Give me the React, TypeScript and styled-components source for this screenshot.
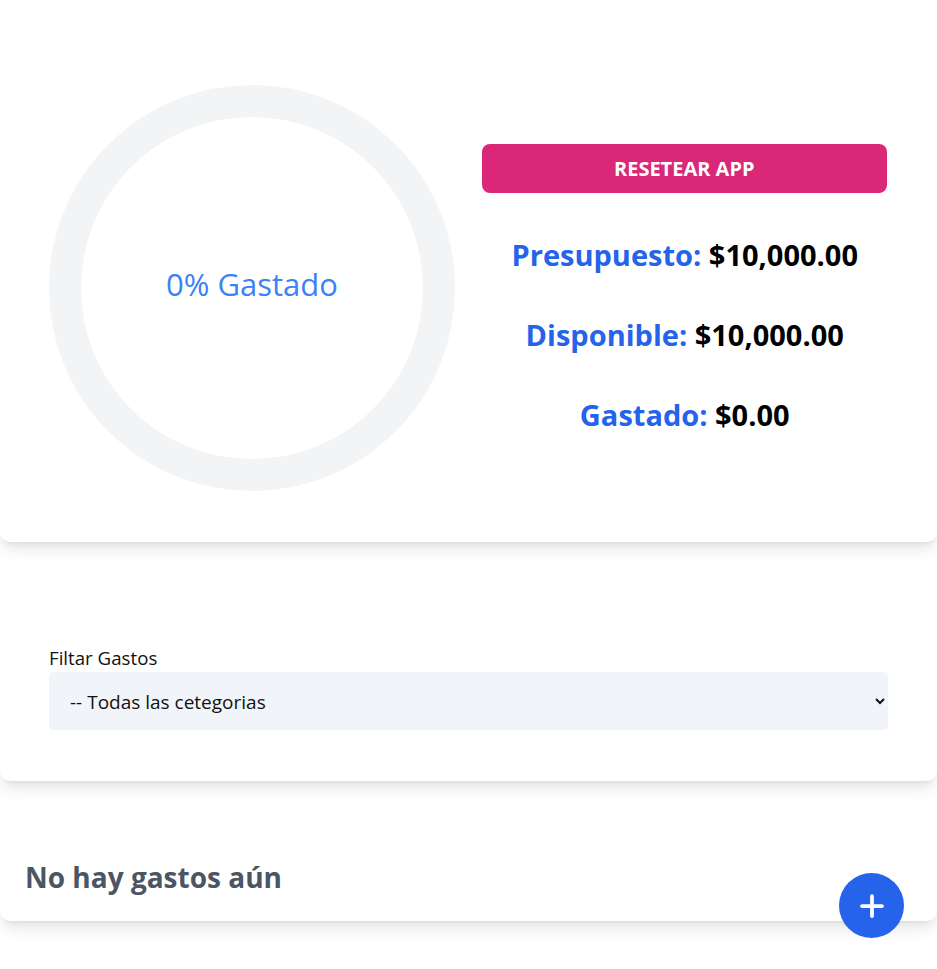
import React from "react";
import styled, { createGlobalStyle } from "styled-components";

const GlobalStyle = createGlobalStyle`
  html, body { margin: 0; padding: 0; background: #ffffff; }
  body { font-family: "Open Sans", "Noto Sans", sans-serif; color: #000; }
  * { box-sizing: border-box; }
`;

const Page = styled.main`
  display: flex;
  flex-direction: column;
  gap: 49px;
  padding-top: 32px;
  padding-bottom: 49px;
`;

const Card = styled.section<{ $pad: string }>`
  background: #ffffff;
  border-radius: 10px;
  box-shadow: 0 10px 15px -3px rgba(0, 0, 0, 0.1), 0 4px 6px -4px rgba(0, 0, 0, 0.1);
  padding: ${(p) => p.$pad};
`;

const BudgetGrid = styled.div`
  display: grid;
  grid-template-columns: 1fr 1fr;
  gap: 26px;
`;

const RingWrap = styled.div`
  display: flex;
  justify-content: center;
`;

const RingText = styled.text`
  font-family: "Open Sans", sans-serif;
  font-size: 31px;
  fill: #3b82f6;
`;

const StatsColumn = styled.div`
  display: flex;
  flex-direction: column;
  justify-content: center;
  align-items: stretch;
  gap: 44px;
`;

const ResetButton = styled.button`
  height: 49px;
  margin: 0 1px 0 0;
  border: none;
  border-radius: 8px;
  background: #db2777;
  color: #ffffff;
  font-family: "Open Sans", sans-serif;
  font-weight: 700;
  font-size: 20px;
  text-transform: uppercase;
  cursor: pointer;
`;

const Stat = styled.p`
  margin: 0;
  text-align: center;
  font-size: 29px;
  line-height: 36px;
  font-weight: 700;
  color: #000;
`;

const StatLabel = styled.span`
  color: #2563eb;
`;

const FilterForm = styled.form`
  display: flex;
  flex-direction: column;
  gap: 2px;
`;

const FilterLabel = styled.label`
  font-size: 18.7px;
  line-height: 25px;
  color: #111;
`;

const Select = styled.select`
  height: 58px;
  width: 100%;
  border: none;
  border-radius: 4px;
  background: #f1f5f9;
  padding: 2px 12px 0 17px;
  font-family: "Open Sans", sans-serif;
  font-size: 19px;
  color: #111;
  outline: none;
`;

const EmptyTitle = styled.h2`
  margin: 0;
  font-size: 28px;
  line-height: 34px;
  font-weight: 700;
  color: #4b5563;
`;

const Fab = styled.button`
  position: fixed;
  right: 33px;
  bottom: 31px;
  width: 65px;
  height: 65px;
  border-radius: 50%;
  border: none;
  background: #2563eb;
  display: flex;
  align-items: center;
  justify-content: center;
  padding: 0;
  cursor: pointer;
`;

export default function App() {
  const size = 406;
  const stroke = 32;
  const r = (size - stroke) / 2;
  return (
    <>
      <GlobalStyle />
      <Page>
        <Card $pad="53px 49px 51px 49px">
          <BudgetGrid>
            <RingWrap>
              <svg width={size} height={size} viewBox={`0 0 ${size} ${size}`}>
                <circle cx={size / 2} cy={size / 2} r={r} fill="none" stroke="#f3f4f5" strokeWidth={stroke} />
                <RingText x={size / 2} y={size / 2 - 4} textAnchor="middle" dominantBaseline="central">
                  0% Gastado
                </RingText>
              </svg>
            </RingWrap>
            <StatsColumn>
              <ResetButton type="button">Resetear App</ResetButton>
              <Stat>
                <StatLabel>Presupuesto:</StatLabel> $10,000.00
              </Stat>
              <Stat>
                <StatLabel>Disponible:</StatLabel> $10,000.00
              </Stat>
              <Stat>
                <StatLabel>Gastado:</StatLabel> $0.00
              </Stat>
            </StatsColumn>
          </BudgetGrid>
        </Card>
        <Card $pad="54px 49px 51px 49px">
          <FilterForm>
            <FilterLabel htmlFor="category">Filtar Gastos</FilterLabel>
            <Select id="category" defaultValue="">
              <option value="">-- Todas las cetegorias</option>
            </Select>
          </FilterForm>
        </Card>
        <Card $pad="30px 25px 27px 25px">
          <EmptyTitle>No hay gastos aún</EmptyTitle>
        </Card>
      </Page>
      <Fab type="button" aria-label="Agregar gasto">
        <svg width="30" height="30" viewBox="0 0 24 24" fill="none" stroke="#ffffff" strokeWidth="3" strokeLinecap="round">
          <path d="M12 4v16M4 12h16" />
        </svg>
      </Fab>
    </>
  );
}
